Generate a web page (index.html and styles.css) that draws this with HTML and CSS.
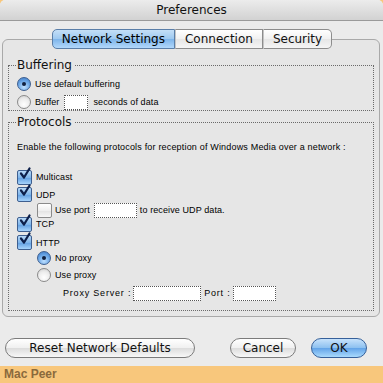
FILE: index.html
```html
<!DOCTYPE html>
<html>
<head>
<meta charset="utf-8">
<link rel="stylesheet" href="styles.css">
</head>
<body>
<div class="window">
  <div class="titlebar">Preferences</div>
  <div class="body">
    <div class="tabs">
      <div class="tab tab-first tab-active">Network Settings</div>
      <div class="tab">Connection</div>
      <div class="tab tab-last">Security</div>
    </div>
    <div class="panel">
      <fieldset class="group group-buffer">
        <legend>Buffering</legend>
        <div class="row row-r1">
          <span class="radio radio-on"><span class="dot"></span></span>
          <span class="lbl">Use default buffering</span>
        </div>
        <div class="row row-r2">
          <span class="radio"></span>
          <span class="lbl">Buffer</span>
          <span class="field field-sec"></span>
          <span class="lbl">seconds of data</span>
        </div>
      </fieldset>
      <fieldset class="group group-proto">
        <legend>Protocols</legend>
        <div class="intro">Enable the following protocols for reception of Windows Media over a network :</div>
        <div class="row row-multi">
          <span class="check check-on"><svg viewBox="0 0 14 14" width="14" height="14"><path d="M3 6.5 L6 10.5 L11.5 1.5" fill="none" stroke="#0d1f4a" stroke-width="2.2" stroke-linecap="round" stroke-linejoin="round"/></svg></span>
          <span class="lbl">Multicast</span>
        </div>
        <div class="row row-udp">
          <span class="check check-on"><svg viewBox="0 0 14 14" width="14" height="14"><path d="M3 6.5 L6 10.5 L11.5 1.5" fill="none" stroke="#0d1f4a" stroke-width="2.2" stroke-linecap="round" stroke-linejoin="round"/></svg></span>
          <span class="lbl">UDP</span>
        </div>
        <div class="row row-sub row-port">
          <span class="check"></span>
          <span class="lbl">Use port</span>
          <span class="field field-port"></span>
          <span class="lbl">to receive UDP data.</span>
        </div>
        <div class="row row-tcp">
          <span class="check check-on"><svg viewBox="0 0 14 14" width="14" height="14"><path d="M3 6.5 L6 10.5 L11.5 1.5" fill="none" stroke="#0d1f4a" stroke-width="2.2" stroke-linecap="round" stroke-linejoin="round"/></svg></span>
          <span class="lbl">TCP</span>
        </div>
        <div class="row row-http">
          <span class="check check-on"><svg viewBox="0 0 14 14" width="14" height="14"><path d="M3 6.5 L6 10.5 L11.5 1.5" fill="none" stroke="#0d1f4a" stroke-width="2.2" stroke-linecap="round" stroke-linejoin="round"/></svg></span>
          <span class="lbl">HTTP</span>
        </div>
        <div class="row row-sub row-noproxy">
          <span class="radio radio-on"><span class="dot"></span></span>
          <span class="lbl">No proxy</span>
        </div>
        <div class="row row-sub row-useproxy">
          <span class="radio"></span>
          <span class="lbl">Use proxy</span>
        </div>
        <div class="row row-proxy">
          <span class="lbl">Proxy Server :</span>
          <span class="field field-server"></span>
          <span class="lbl">Port :</span>
          <span class="field field-pport"></span>
        </div>
      </fieldset>
    </div>
    <div class="buttons">
      <div class="btn btn-reset">Reset Network Defaults</div>
      <div class="spacer"></div>
      <div class="btn btn-cancel">Cancel</div>
      <div class="btn btn-ok">OK</div>
    </div>
  </div>
  <div class="footer">Mac Peer</div>
</div>
</body>
</html>
```
FILE: styles.css
```css
html, body {
  margin: 0;
  padding: 0;
  background: #f8c77c;
}
.window {
  width: 383px;
  height: 383px;
  display: flex;
  flex-direction: column;
  overflow: hidden;
  font-family: "DejaVu Sans", sans-serif;
  color: #000;
  background: #ebebeb;
  border-radius: 5px 5px 0 0;
}
.titlebar {
  height: 20px;
  line-height: 20px;
  text-align: center;
  font-size: 12px;
  color: #111;
  background: linear-gradient(#ececec, #d2d2d2);
  border-bottom: 1px solid #9a9a9a;
  border-radius: 5px 5px 0 0;
  flex: none;
}
.body {
  flex: 1;
  display: flex;
  flex-direction: column;
  background: #ebebeb;
  padding: 8px 3px 0 2px;
}
.tabs {
  display: flex;
  justify-content: center;
  position: relative;
  z-index: 1;
  margin-bottom: -10px;
  margin-left: 2px;
}
.tab {
  height: 18px;
  line-height: 18px;
  font-size: 12px;
  padding: 0 9px;
  background: linear-gradient(#ffffff, #f1f1f1 50%, #e6e6e6 51%, #f5f5f5);
  border: 1px solid #8c8c8c;
  border-left: 1px solid #c4c4c4;
  color: #111;
}
.tab-first {
  border-left: 1px solid #8c8c8c;
  border-radius: 5px 0 0 5px;
}
.tab-last {
  border-radius: 0 5px 5px 0;
}
.tab-active {
  background: linear-gradient(#c4dff7, #9dc8f0 50%, #7db4ea 51%, #b2d8fb);
  border-color: #5a7ea8;
  color: #000;
}
.panel {
  height: 278px;
  flex: none;
  box-sizing: border-box;
  border: 1px solid #a9a9a9;
  border-radius: 6px;
  background: #e6e6e6;
  padding: 18px 5px 0 5px;
  display: flex;
  flex-direction: column;
}
fieldset.group {
  margin: 0;
  border: 1px dotted #6a6a6a;
  padding: 0 0 0 8px;
  min-width: 0;
}
legend {
  font-size: 12px;
  padding: 0 2px 0 1px;
  margin-left: -1px;
  color: #111;
  line-height: 14px;
}
.group-buffer {
  height: 53px;
  box-sizing: border-box;
  padding-top: 3px !important;
}
.group-proto {
  margin-top: 4px !important;
  height: 196px;
  box-sizing: border-box;
  padding-top: 10px !important;
}
.row {
  display: flex;
  align-items: center;
  font-family: "Liberation Sans", sans-serif;
  font-size: 9px;
  gap: 4px;
  height: 18px;
}
.lbl {
  white-space: nowrap;
  letter-spacing: 0.1px;
}
.row-r2 { gap: 4px; }
.row-sub {
  padding-left: 20px;
}
.row-multi { height: 18px; }
.row-udp { height: 17px; }
.row-port { height: 14px; gap: 3px; }
.row-tcp { height: 14px; }
.row-http { height: 15px; margin-top: 4px; }
.row-noproxy { height: 16px; }
.row-useproxy { height: 18px; }
.row-proxy {
  padding-left: 46px;
  height: 18px;
  gap: 2px;
}
.row-proxy .lbl { letter-spacing: 0.8px; }
.intro {
  font-family: "Liberation Sans", sans-serif;
  font-size: 9px;
  letter-spacing: 0.18px;
  white-space: nowrap;
  height: 29px;
  padding-top: 3px;
  box-sizing: border-box;
}
.radio {
  width: 12px;
  height: 12px;
  border-radius: 50%;
  border: 1px solid #8a8a8a;
  background: radial-gradient(circle at 50% 70%, #ffffff, #ececec 55%, #c9c9c9);
  display: inline-flex;
  align-items: center;
  justify-content: center;
  flex: none;
}
.radio-on {
  border-color: #3e5f8f;
  background: radial-gradient(circle at 50% 75%, #bfe0ff, #6aa6e6 55%, #3a76c4);
}
.dot {
  width: 4px;
  height: 4px;
  border-radius: 50%;
  background: #10203f;
}
.check {
  width: 13px;
  height: 13px;
  border: 1px solid #8a8a8a;
  border-radius: 2px;
  background: linear-gradient(#ffffff, #efefef 50%, #e2e2e2 51%, #f7f7f7);
  flex: none;
  position: relative;
  display: inline-block;
}
.check-on {
  border-color: #3e5f8f;
  background: linear-gradient(#b7d8f7, #7fb5ea 50%, #5f9de0 51%, #a6d3fb);
}
.check svg {
  position: absolute;
  left: 0;
  top: -4px;
}
.field {
  height: 13px;
  border: 1px dotted #555;
  background: #fff;
  flex: none;
}
.field-sec { width: 22px; margin: 0 1px; }
.field-port { width: 41px; margin: 0 0 0 1px; }
.field-server { width: 66px; margin-right: 1px; }
.field-pport { width: 41px; }
.buttons {
  display: flex;
  align-items: center;
  padding: 21px 13px 0 3px;
  flex: none;
}
.spacer { flex: 1; }
.btn {
  height: 18px;
  line-height: 18px;
  border-radius: 10px;
  border: 1px solid #7b7b7b;
  background: linear-gradient(#ffffff, #f0f0f0 50%, #dcdcdc 51%, #f8f8f8);
  text-align: center;
  font-size: 12px;
  color: #111;
}
.btn-reset { width: 188px; }
.btn-cancel { width: 64px; margin-right: 15px; }
.btn-ok {
  width: 54px;
  border-color: #36609a;
  background: linear-gradient(#c7e2fb, #8cc0f0 50%, #62a3e8 51%, #a9dafd);
}
.footer {
  height: 17px;
  line-height: 17px;
  background: #f8c77c;
  color: #8a6a3c;
  font-family: "Liberation Sans", sans-serif;
  font-weight: bold;
  font-size: 12px;
  padding-left: 4px;
  flex: none;
}
```
